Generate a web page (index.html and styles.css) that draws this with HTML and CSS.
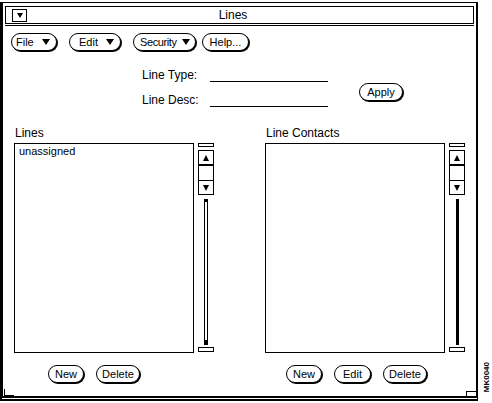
FILE: index.html
```html
<!DOCTYPE html>
<html lang="en">
<head>
    <meta charset="UTF-8"/>
    <title>Lines</title>
    <link rel="stylesheet" href="styles.css">
</head>
<body>
    <div class="window">
        <span class="corner corner-bl"></span>
        <span class="corner corner-br"></span>

        <div class="titlebar">
            <span class="window-menu"><span class="tri-down tri-small"></span></span>
            <span class="title">Lines</span>
        </div>
        <div class="title-rule"></div>

        <div class="menubar">
            <button class="btn menu-btn btn-file">File<span class="tri-down"></span></button>
            <button class="btn menu-btn btn-edit">Edit<span class="tri-down"></span></button>
            <button class="btn menu-btn btn-security">Security<span class="tri-down"></span></button>
            <button class="btn btn-help">Help...</button>
        </div>

        <div class="form">
            <div class="fields">
                <div class="field"><label>Line Type:</label><span class="input"></span></div>
                <div class="field"><label>Line Desc:</label><span class="input"></span></div>
            </div>
            <button class="btn btn-apply">Apply</button>
        </div>

        <div class="panes">
            <div class="pane">
                <div class="pane-label">Lines</div>
                <div class="list-row">
                    <div class="list">
                        <div class="list-item">unassigned</div>
                    </div>
                    <div class="scrollbar">
                        <div class="cap"></div>
                        <div class="elevator">
                            <div class="elev-up"><span class="tri-up"></span></div>
                            <div class="elev-mid"></div>
                            <div class="elev-down"><span class="tri-down tri-arrow"></span></div>
                        </div>
                        <div class="trough"></div>
                        <div class="cap cap-bottom"></div>
                    </div>
                </div>
                <div class="pane-buttons left-buttons">
                    <button class="btn btn-new">New</button>
                    <button class="btn btn-delete">Delete</button>
                </div>
            </div>

            <div class="pane pane-right">
                <div class="pane-label">Line Contacts</div>
                <div class="list-row">
                    <div class="list"></div>
                    <div class="scrollbar">
                        <div class="cap"></div>
                        <div class="elevator">
                            <div class="elev-up"><span class="tri-up"></span></div>
                            <div class="elev-mid"></div>
                            <div class="elev-down"><span class="tri-down tri-arrow"></span></div>
                        </div>
                        <div class="trough trough-full"></div>
                        <div class="cap cap-bottom"></div>
                    </div>
                </div>
                <div class="pane-buttons right-buttons">
                    <button class="btn btn-new">New</button>
                    <button class="btn btn-edit-small">Edit</button>
                    <button class="btn btn-delete">Delete</button>
                </div>
            </div>
        </div>
    </div>
    <div class="fig-id">MK0040</div>
</body>
</html>
```

FILE: styles.css
```css
*{
    box-sizing: border-box;
}

body{
    margin: 0;
    background: #fff;
    color: #000;
    font-family: "Liberation Sans", Arial, sans-serif;
    font-size: 11px;
}

.window{
    position: relative;
    width: 478px;
    height: 399px;
    margin-top: 2px;
    border-top: 1px solid #000;
    border-left: 3px solid #000;
    border-right: 2px solid #000;
    border-bottom: 5px double #000;
}

/* resize corners */
.corner{
    position: absolute;
    bottom: 0;
    width: 10px;
    height: 7px;
}

.corner-bl{
    left: 1px;
    border-left: 1px solid #000;
    border-bottom: 1px solid #000;
}

.corner-br{
    right: 0;
    height: 5px;
    border-left: 1px solid #000;
    border-top: 1px solid #000;
}

/* title bar */
.titlebar{
    display: flex;
    align-items: center;
    width: 469px;
    height: 18px;
    margin: 3px 0 0 2px;
    border: 1px solid #000;
}

.window-menu{
    display: flex;
    align-items: center;
    justify-content: center;
    width: 15px;
    height: 13px;
    margin-left: 6px;
    border: 1px solid #000;
}

.title{
    flex: 1;
    text-align: center;
    font-size: 12px;
    padding-right: 34px;
}

.title-rule{
    width: 469px;
    margin: 1px 0 0 2px;
    border-top: 1px solid #000;
}

/* triangles */
.tri-down{
    width: 0;
    height: 0;
    border-left: 4px solid transparent;
    border-right: 4px solid transparent;
    border-top: 6px solid #000;
}

.tri-small{
    border-left-width: 3px;
    border-right-width: 3px;
    border-top-width: 5px;
}

.tri-up{
    width: 0;
    height: 0;
    border-left: 3px solid transparent;
    border-right: 3px solid transparent;
    border-bottom: 6px solid #000;
}

.tri-arrow{
    border-left-width: 3px;
    border-right-width: 3px;
}

/* buttons */
.btn{
    display: flex;
    align-items: center;
    justify-content: center;
    height: 18px;
    padding: 0;
    border: 1px solid #000;
    border-radius: 9px;
    background: #fff;
    box-shadow: 1px 1px 0 #000;
    color: #000;
    font: 11px "Liberation Sans", Arial, sans-serif;
}

.menubar{
    display: flex;
    margin: 7px 0 0 8px;
}

.menu-btn{
    justify-content: space-between;
    padding: 0 6px 0 9px;
}

.btn-file{
    width: 46px;
    padding-left: 4px;
}

.btn-edit{
    width: 52px;
    margin-left: 12px;
}

.btn-security{
    width: 63px;
    margin-left: 12px;
    padding: 0 5px 0 6px;
    letter-spacing: -0.4px;
}

.btn-help{
    width: 47px;
    margin-left: 6px;
}

/* form */
.form{
    display: flex;
    margin: 17px 0 0 139px;
}

.field{
    display: flex;
    align-items: flex-end;
    height: 14px;
}

.field + .field{
    margin-top: 11px;
}

.field label{
    width: 68px;
    font-size: 12px;
    line-height: 14px;
}

.input{
    width: 118px;
    height: 14px;
    border-bottom: 1px solid #000;
}

.btn-apply{
    width: 44px;
    margin: 15px 0 0 31px;
}

/* lists */
.panes{
    display: flex;
    margin: 19px 0 0 11px;
}

.pane{
    width: 200px;
}

.pane-right{
    width: 201px;
    margin-left: 51px;
}

.pane-label{
    height: 14px;
    margin-bottom: 3px;
    padding-left: 1px;
    font-size: 12px;
    line-height: 14px;
}

.list-row{
    display: flex;
    height: 210px;
}

.list{
    width: 180px;
    border: 1px solid #000;
    padding: 1px 4px;
}

.list-item{
    line-height: 13px;
}

.scrollbar{
    display: flex;
    flex-direction: column;
    width: 16px;
    margin-left: 4px;
}

.cap{
    height: 4px;
    border: 1px solid #000;
}

.cap-bottom{
    height: 5px;
    margin-top: 2px;
}

.elevator{
    display: flex;
    flex-direction: column;
    height: 45px;
    margin-top: 3px;
    border: 1px solid #000;
}

.elev-up,
.elev-down{
    display: flex;
    align-items: center;
    justify-content: center;
}

.elev-up{
    height: 15px;
    border-bottom: 2px solid #000;
}

.elev-mid{
    height: 15px;
    border-bottom: 1px solid #000;
}

.elev-down{
    height: 13px;
}

.trough{
    width: 4px;
    height: 146px;
    margin: 4px auto 0;
    border: 1px solid #000;
    background: linear-gradient(#000 0 2px, #fff 2px calc(100% - 4px), #000 calc(100% - 4px));
}

.trough-full{
    width: 3px;
    background: #000;
}

.pane-buttons{
    display: flex;
    gap: 12px;
    margin-top: 12px;
}

.left-buttons{
    padding-left: 34px;
}

.right-buttons{
    padding-left: 21px;
}

.btn-new{
    width: 36px;
}

.btn-edit-small{
    width: 37px;
}

.btn-delete{
    width: 44px;
}

.fig-id{
    position: absolute;
    left: 482px;
    top: 362px;
    writing-mode: vertical-rl;
    transform: rotate(180deg);
    font-size: 8px;
    font-weight: bold;
}
```
